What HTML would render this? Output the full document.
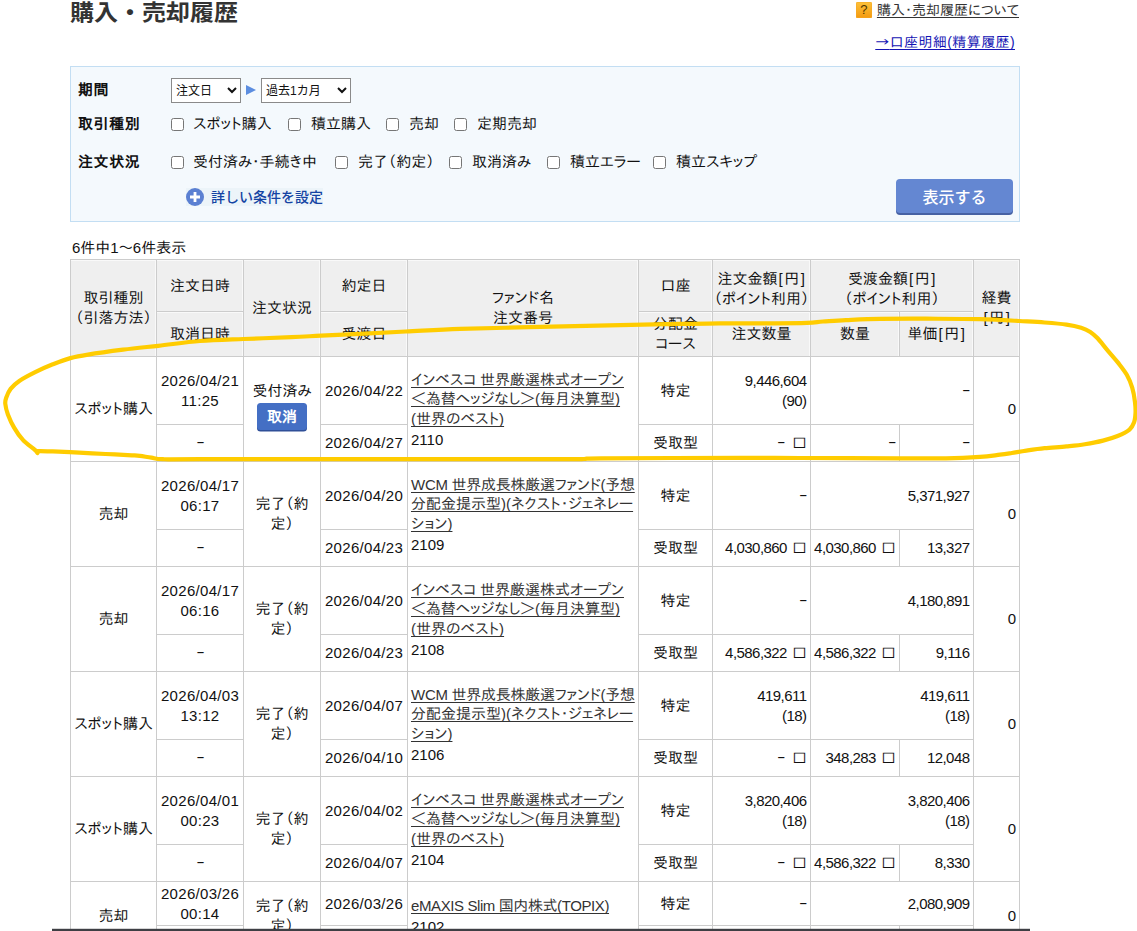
<!DOCTYPE html>
<html lang="ja">
<head>
<meta charset="utf-8">
<title>購入・売却履歴</title>
<style>
html,body{margin:0;padding:0;background:#fff;}
body{width:1137px;height:931px;overflow:hidden;position:relative;color:#111;
  font-family:"Liberation Sans","IPAPGothic","Noto Sans CJK JP",sans-serif;font-feature-settings:"palt";font-size:15px;line-height:20px;}
.abs{position:absolute;white-space:nowrap;}
h1,.sel,#btn,.more{font-feature-settings:normal;}
h1{transform:scaleY(0.92);transform-origin:0 29px;position:absolute;left:70px;top:-6px;margin:0;font-family:"Liberation Sans","Noto Sans CJK JP",sans-serif;font-weight:700;font-size:24px;line-height:36px;color:#333;white-space:nowrap;letter-spacing:0;}
a{color:#333;text-decoration:underline;}
.help{right:118px;top:0px;font-size:14px;}
.help .q{position:absolute;left:-21px;top:2px;width:16px;height:16px;background:linear-gradient(#fdc23a,#f39a10);color:#4d3600;font-size:13px;line-height:16px;text-align:center;border-radius:1.5px;box-shadow:inset 0 0 0 0.5px #f6a722;}
.acct{right:122px;top:32px;font-size:14px;letter-spacing:0.4px;}
.acct a{color:#1414b4;}
.cjk{font-family:"IPAPGothic","Noto Sans CJK JP",sans-serif;}
#filter{position:absolute;left:70px;top:66px;width:948px;height:154px;background:#f4f9fd;border:1px solid #c3def3;}
.lbl{font-weight:bold;color:#111;letter-spacing:0.6px;}
.cb{position:absolute;width:11px;height:11px;border:1px solid #767676;border-radius:2.5px;background:#fff;}
.sel{position:absolute;height:22.5px;border:1px solid #8a8a8a;background:#fff;font-family:"Liberation Sans","Noto Sans CJK JP",sans-serif;font-size:12px;line-height:22px;color:#111;box-sizing:content-box;}
.sel span{position:absolute;left:4px;top:0.5px;}
.sel svg{position:absolute;right:3.2px;top:8px;}
#btn{position:absolute;left:896px;top:179px;width:117px;height:34px;background:#6487d2;border-radius:4px;box-shadow:0 2px 0 #4762a4;color:#fff;font-family:"Liberation Sans","Noto Sans CJK JP",sans-serif;font-size:16px;line-height:37px;text-align:center;font-weight:500;}
.more{left:211px;top:187px;font-family:"Liberation Sans","Noto Sans CJK JP",sans-serif;font-size:14px;color:#1443a3;font-weight:500;}
#hl{position:absolute;left:186px;top:188px;width:137px;height:18px;background:#ecf4f9;}
table{position:absolute;left:70px;top:259px;width:950px;border-collapse:collapse;table-layout:fixed;}
td{letter-spacing:0;white-space:nowrap;}
td,th{border:1px solid #ccc;padding:0 3px;font-weight:normal;text-align:center;vertical-align:middle;overflow:hidden;}
th{background:#efefef;white-space:nowrap;padding:0;box-shadow:inset 0 1px 0 #f9f9f9,inset -1px 0 0 #f9f9f9;}
th.t2{padding-top:6px;}
.br{letter-spacing:1.6px;margin-left:1px;margin-right:-1px;}
td.r{text-align:right;padding-right:3.5px;padding-left:0;white-space:nowrap;letter-spacing:-0.55px;}
.sq{font-family:"IPAGothic",sans-serif;display:inline-block;transform:scaleY(0.92);margin-left:1.5px;margin-right:-0.5px;letter-spacing:0;}
td.l{text-align:left;padding-left:3px;padding-right:0;white-space:nowrap;}
td.dt{letter-spacing:0.3px;}
td.f{line-height:19.5px;padding-top:1px;}
td.f .n{line-height:20px;margin-top:1.5px;}
a{text-decoration-skip-ink:none;text-underline-offset:1.5px;text-decoration-thickness:1px;}
.d{display:inline-block;transform:scaleX(1.7);transform-origin:right center;position:relative;top:-1px;}
td:not(.r) .d{transform-origin:center center;}
.cancel{display:inline-block;vertical-align:top;width:50px;height:27.5px;line-height:27.5px;background:#446fc4;color:#fff;font-weight:bold;border-radius:3.5px;box-shadow:0 1.5px 0 #2f4f98;margin-top:2px;margin-bottom:7.5px;}
#cut{position:absolute;left:52px;top:929px;width:978px;height:2px;background:#3e3f44;box-shadow:0 -1px 0 rgba(62,63,68,0.22);}
#ann{position:absolute;left:0;top:0;}
</style>
</head>
<body>
<h1>購入・売却履歴</h1>
<div class="abs help"><span class="q">?</span><a>購入・売却履歴について</a></div>
<div class="abs acct"><a><span class="cjk">→</span>口座明細(精算履歴)</a></div>

<div id="filter"></div>
<div class="abs lbl" style="left:78px;top:80px">期間</div>
<div class="abs lbl" style="left:78px;top:114px">取引種別</div>
<div class="abs lbl" style="left:78px;top:152px">注文状況</div>

<div class="sel" style="left:171px;top:78px;width:68px"><span>注文日</span><svg width="10" height="7" viewBox="0 0 10 7"><path d="M1 1l4 4 4-4" fill="none" stroke="#111" stroke-width="2"/></svg></div>
<svg class="abs" style="left:246px;top:85px" width="10" height="10" viewBox="0 0 10 10"><path d="M0 0L10 5L0 10Z" fill="#5b8de0"/></svg>
<div class="sel" style="left:261px;top:78px;width:88px"><span>過去1カ月</span><svg width="10" height="7" viewBox="0 0 10 7"><path d="M1 1l4 4 4-4" fill="none" stroke="#111" stroke-width="2"/></svg></div>

<span class="cb" style="left:171px;top:118px"></span><div class="abs" style="left:193px;top:114px">スポット購入</div>
<span class="cb" style="left:288px;top:118px"></span><div class="abs" style="left:311px;top:114px">積立購入</div>
<span class="cb" style="left:386px;top:118px"></span><div class="abs" style="left:409px;top:114px">売却</div>
<span class="cb" style="left:454px;top:118px"></span><div class="abs" style="left:477px;top:114px">定期売却</div>

<span class="cb" style="left:171px;top:156px"></span><div class="abs" style="left:193px;top:151.5px">受付済み・手続き中</div>
<span class="cb" style="left:335px;top:156px"></span><div class="abs" style="left:358px;top:151.5px">完了（約定）</div>
<span class="cb" style="left:449px;top:156px"></span><div class="abs" style="left:472px;top:151.5px">取消済み</div>
<span class="cb" style="left:547px;top:156px"></span><div class="abs" style="left:570px;top:151.5px">積立エラー</div>
<span class="cb" style="left:653px;top:156px"></span><div class="abs" style="left:676px;top:151.5px">積立スキップ</div>

<div id="hl"></div>
<svg class="abs" style="left:186px;top:188px" width="18" height="18" viewBox="0 0 18 18"><circle cx="9" cy="9" r="9" fill="#5b80d2"/><path d="M9 4v10M4 9h10" stroke="#fff" stroke-width="2.8"/></svg>
<div class="abs more">詳しい条件を設定</div>
<div id="btn">表示する</div>

<div class="abs" style="left:72px;top:238px;font-size:15px">6件中1～6件表示</div>

<table>
<colgroup><col style="width:86px"><col style="width:87px"><col style="width:77px"><col style="width:87px"><col style="width:231px"><col style="width:74px"><col style="width:98px"><col style="width:89px"><col style="width:74px"><col style="width:46px"></colgroup>
<tr style="height:52px">
 <th rowspan="2">取引種別<br>（引落方法）</th><th>注文日時</th><th rowspan="2">注文状況</th><th>約定日</th><th rowspan="2">ファンド名<br>注文番号</th><th>口座</th><th class="t2">注文金額<span class="br">[円]</span><br>（ポイント利用）</th><th colspan="2" class="t2">受渡金額<span class="br">[円]</span><br>（ポイント利用）</th><th rowspan="2">経費<br><span class="br">[円]</span></th>
</tr>
<tr style="height:45px"><th>取消日時</th><th>受渡日</th><th>分配金<br>コース</th><th>注文数量</th><th>数量</th><th>単価<span class="br">[円]</span></th></tr>

<tr style="height:68px"><td rowspan="2">スポット購入</td><td class="dt">2026/04/21<br>11:25</td><td rowspan="2">受付済み<br><span class="cancel">取消</span></td><td class="dt">2026/04/22</td><td rowspan="2" class="l f"><a>インベスコ 世界厳選株式オープン<br>＜為替ヘッジなし＞(毎月決算型)<br>(世界のベスト)</a><div class="n">2110</div></td><td>特定</td><td class="r">9,446,604<br>(90)</td><td colspan="2" class="r"><span class="d">-</span></td><td rowspan="2" class="r">0</td></tr>
<tr style="height:37px"><td><span class="d">-</span></td><td class="dt">2026/04/27</td><td>受取型</td><td class="r"><span class="d" style="margin-right:2px">-</span> <span class="sq">□</span></td><td class="r"><span class="d">-</span></td><td class="r"><span class="d">-</span></td></tr>

<tr style="height:68px"><td rowspan="2">売却</td><td class="dt">2026/04/17<br>06:17</td><td rowspan="2">完了（約<br>定）</td><td class="dt">2026/04/20</td><td rowspan="2" class="l f"><a><span style="letter-spacing:-0.27px">WCM 世界成長株厳選ファンド(予想</span><br>分配金提示型)(ネクスト・ジェネレー<br>ション)</a><div class="n">2109</div></td><td>特定</td><td class="r"><span class="d">-</span></td><td colspan="2" class="r">5,371,927</td><td rowspan="2" class="r">0</td></tr>
<tr style="height:37px"><td><span class="d">-</span></td><td class="dt">2026/04/23</td><td>受取型</td><td class="r">4,030,860 <span class="sq">□</span></td><td class="r">4,030,860 <span class="sq">□</span></td><td class="r">13,327</td></tr>

<tr style="height:68px"><td rowspan="2">売却</td><td class="dt">2026/04/17<br>06:16</td><td rowspan="2">完了（約<br>定）</td><td class="dt">2026/04/20</td><td rowspan="2" class="l f"><a>インベスコ 世界厳選株式オープン<br>＜為替ヘッジなし＞(毎月決算型)<br>(世界のベスト)</a><div class="n">2108</div></td><td>特定</td><td class="r"><span class="d">-</span></td><td colspan="2" class="r">4,180,891</td><td rowspan="2" class="r">0</td></tr>
<tr style="height:37px"><td><span class="d">-</span></td><td class="dt">2026/04/23</td><td>受取型</td><td class="r">4,586,322 <span class="sq">□</span></td><td class="r">4,586,322 <span class="sq">□</span></td><td class="r">9,116</td></tr>

<tr style="height:68px"><td rowspan="2">スポット購入</td><td class="dt">2026/04/03<br>13:12</td><td rowspan="2">完了（約<br>定）</td><td class="dt">2026/04/07</td><td rowspan="2" class="l f"><a><span style="letter-spacing:-0.27px">WCM 世界成長株厳選ファンド(予想</span><br>分配金提示型)(ネクスト・ジェネレー<br>ション)</a><div class="n">2106</div></td><td>特定</td><td class="r">419,611<br>(18)</td><td colspan="2" class="r">419,611<br>(18)</td><td rowspan="2" class="r">0</td></tr>
<tr style="height:37px"><td><span class="d">-</span></td><td class="dt">2026/04/10</td><td>受取型</td><td class="r"><span class="d" style="margin-right:2px">-</span> <span class="sq">□</span></td><td class="r">348,283 <span class="sq">□</span></td><td class="r">12,048</td></tr>

<tr style="height:68px"><td rowspan="2">スポット購入</td><td class="dt">2026/04/01<br>00:23</td><td rowspan="2">完了（約<br>定）</td><td class="dt">2026/04/02</td><td rowspan="2" class="l f"><a>インベスコ 世界厳選株式オープン<br>＜為替ヘッジなし＞(毎月決算型)<br>(世界のベスト)</a><div class="n">2104</div></td><td>特定</td><td class="r">3,820,406<br>(18)</td><td colspan="2" class="r">3,820,406<br>(18)</td><td rowspan="2" class="r">0</td></tr>
<tr style="height:37px"><td><span class="d">-</span></td><td class="dt">2026/04/07</td><td>受取型</td><td class="r"><span class="d" style="margin-right:2px">-</span> <span class="sq">□</span></td><td class="r">4,586,322 <span class="sq">□</span></td><td class="r">8,330</td></tr>

<tr style="height:44px"><td rowspan="2">売却</td><td class="dt">2026/03/26<br>00:14</td><td rowspan="2">完了（約<br>定）</td><td class="dt">2026/03/26</td><td rowspan="2" class="l f"><a style="letter-spacing:-0.4px">eMAXIS Slim 国内株式(TOPIX)</a><div class="n">2102</div></td><td>特定</td><td class="r"><span class="d">-</span></td><td colspan="2" class="r">2,080,909</td><td rowspan="2" class="r">0</td></tr>
<tr style="height:25px"><td><span class="d">-</span></td><td class="dt">2026/03/30</td><td>受取型</td><td class="r">1,106,000 <span class="sq">□</span></td><td class="r">1,106,000 <span class="sq">□</span></td><td class="r">18,815</td></tr>
</table>

<div id="cut"></div>
<svg id="ann" width="1137" height="931" viewBox="0 0 1137 931"><path d="M37.5 453.0C37.2 452.6 36.2 451.2 35.5 450.5C34.8 449.8 35.5 450.5 33.4 448.7C31.3 446.9 26.1 443.4 22.9 439.9C19.7 436.4 16.6 431.9 14.1 427.6C11.6 423.4 9.4 418.3 7.9 414.4C6.4 410.4 5.6 406.7 5.3 403.9C5.0 401.1 5.3 400.2 6.2 397.7C7.1 395.2 8.4 391.7 10.6 388.9C12.8 386.1 15.2 383.8 19.3 381.0C23.4 378.2 29.6 375.0 35.2 372.2C40.8 369.4 46.9 366.6 52.8 364.3C58.7 362.0 64.5 359.7 70.4 358.1C76.3 356.5 79.2 356.0 88.0 354.6C96.8 353.2 111.4 351.2 123.1 349.7C134.8 348.2 145.5 347.2 158.3 345.8C171.1 344.4 185.8 342.1 200.0 341.0C214.2 339.9 228.2 339.6 243.4 339.0C258.6 338.4 278.6 337.8 291.5 337.2C304.4 336.6 309.6 336.2 321.0 335.6C332.4 335.0 345.9 334.5 360.0 333.8C374.1 333.1 389.1 332.3 405.8 331.5C422.5 330.7 439.5 329.6 460.0 328.9C480.5 328.2 505.7 327.8 528.6 327.2C551.5 326.6 574.3 326.1 597.2 325.6C620.1 325.1 645.3 324.6 665.8 324.2C686.3 323.8 703.4 323.4 720.0 323.3C736.6 323.2 751.2 323.4 765.7 323.3C780.2 323.2 797.4 323.1 806.9 322.8C816.4 322.5 816.4 321.9 822.9 321.5C829.4 321.1 836.3 320.5 845.8 320.1C855.3 319.7 866.7 319.1 880.0 318.9C893.3 318.7 909.1 318.6 925.8 318.7C942.5 318.8 964.5 318.8 980.0 319.2C995.5 319.6 1008.2 320.4 1019.0 321.0C1029.8 321.6 1036.7 321.9 1044.6 322.5C1052.5 323.1 1060.4 323.7 1066.5 324.6C1072.6 325.5 1077.1 326.5 1081.1 327.7C1085.1 328.9 1087.5 330.1 1090.3 331.9C1093.0 333.7 1094.9 335.4 1097.6 338.3C1100.3 341.2 1103.4 345.3 1106.7 349.3C1110.0 353.3 1114.2 357.9 1117.6 362.1C1120.9 366.4 1124.4 370.6 1126.8 374.8C1129.2 379.1 1130.8 383.0 1132.2 387.6C1133.6 392.2 1134.5 397.9 1135.0 402.2C1135.5 406.5 1135.7 409.8 1135.5 413.2C1135.3 416.6 1135.1 419.6 1134.1 422.3C1133.1 425.0 1132.2 427.3 1129.5 429.6C1126.8 431.9 1122.0 434.2 1117.6 436.0C1113.2 437.8 1108.5 439.2 1103.0 440.6C1097.5 442.0 1090.9 443.2 1084.8 444.2C1078.7 445.2 1073.2 445.7 1066.5 446.4C1059.8 447.1 1051.3 447.5 1044.6 448.2C1037.9 448.9 1031.9 449.8 1026.4 450.6C1020.9 451.4 1016.2 452.3 1011.8 453.0C1007.4 453.7 1005.3 454.1 1000.0 454.7C994.7 455.3 989.0 456.3 980.0 456.9C971.0 457.5 959.3 458.1 946.0 458.3C932.7 458.5 924.3 458.4 900.0 458.3C875.7 458.2 826.7 458.1 800.0 458.0C773.3 457.9 773.2 457.8 740.0 457.8C706.8 457.9 627.0 458.1 601.0 458.3C575.0 458.5 590.8 458.9 584.0 459.0C577.2 459.1 590.7 459.1 560.0 459.1C529.3 459.1 460.0 459.2 400.0 459.2C340.0 459.2 239.5 459.2 200.0 459.2C160.5 459.2 171.1 459.5 163.0 459.2C154.9 458.9 155.2 458.2 151.4 457.6C147.6 457.1 143.2 456.3 140.0 455.9C136.8 455.5 137.7 455.6 131.9 455.3C126.2 455.0 114.3 454.4 105.5 454.0C96.7 453.6 88.0 453.0 79.2 452.6C70.4 452.2 60.0 451.7 52.8 451.4C45.6 451.1 38.8 451.1 36.0 451.0" fill="none" stroke="#ffcc00" stroke-width="4.2" stroke-linecap="round" stroke-linejoin="round"/></svg>
</body>
</html>
